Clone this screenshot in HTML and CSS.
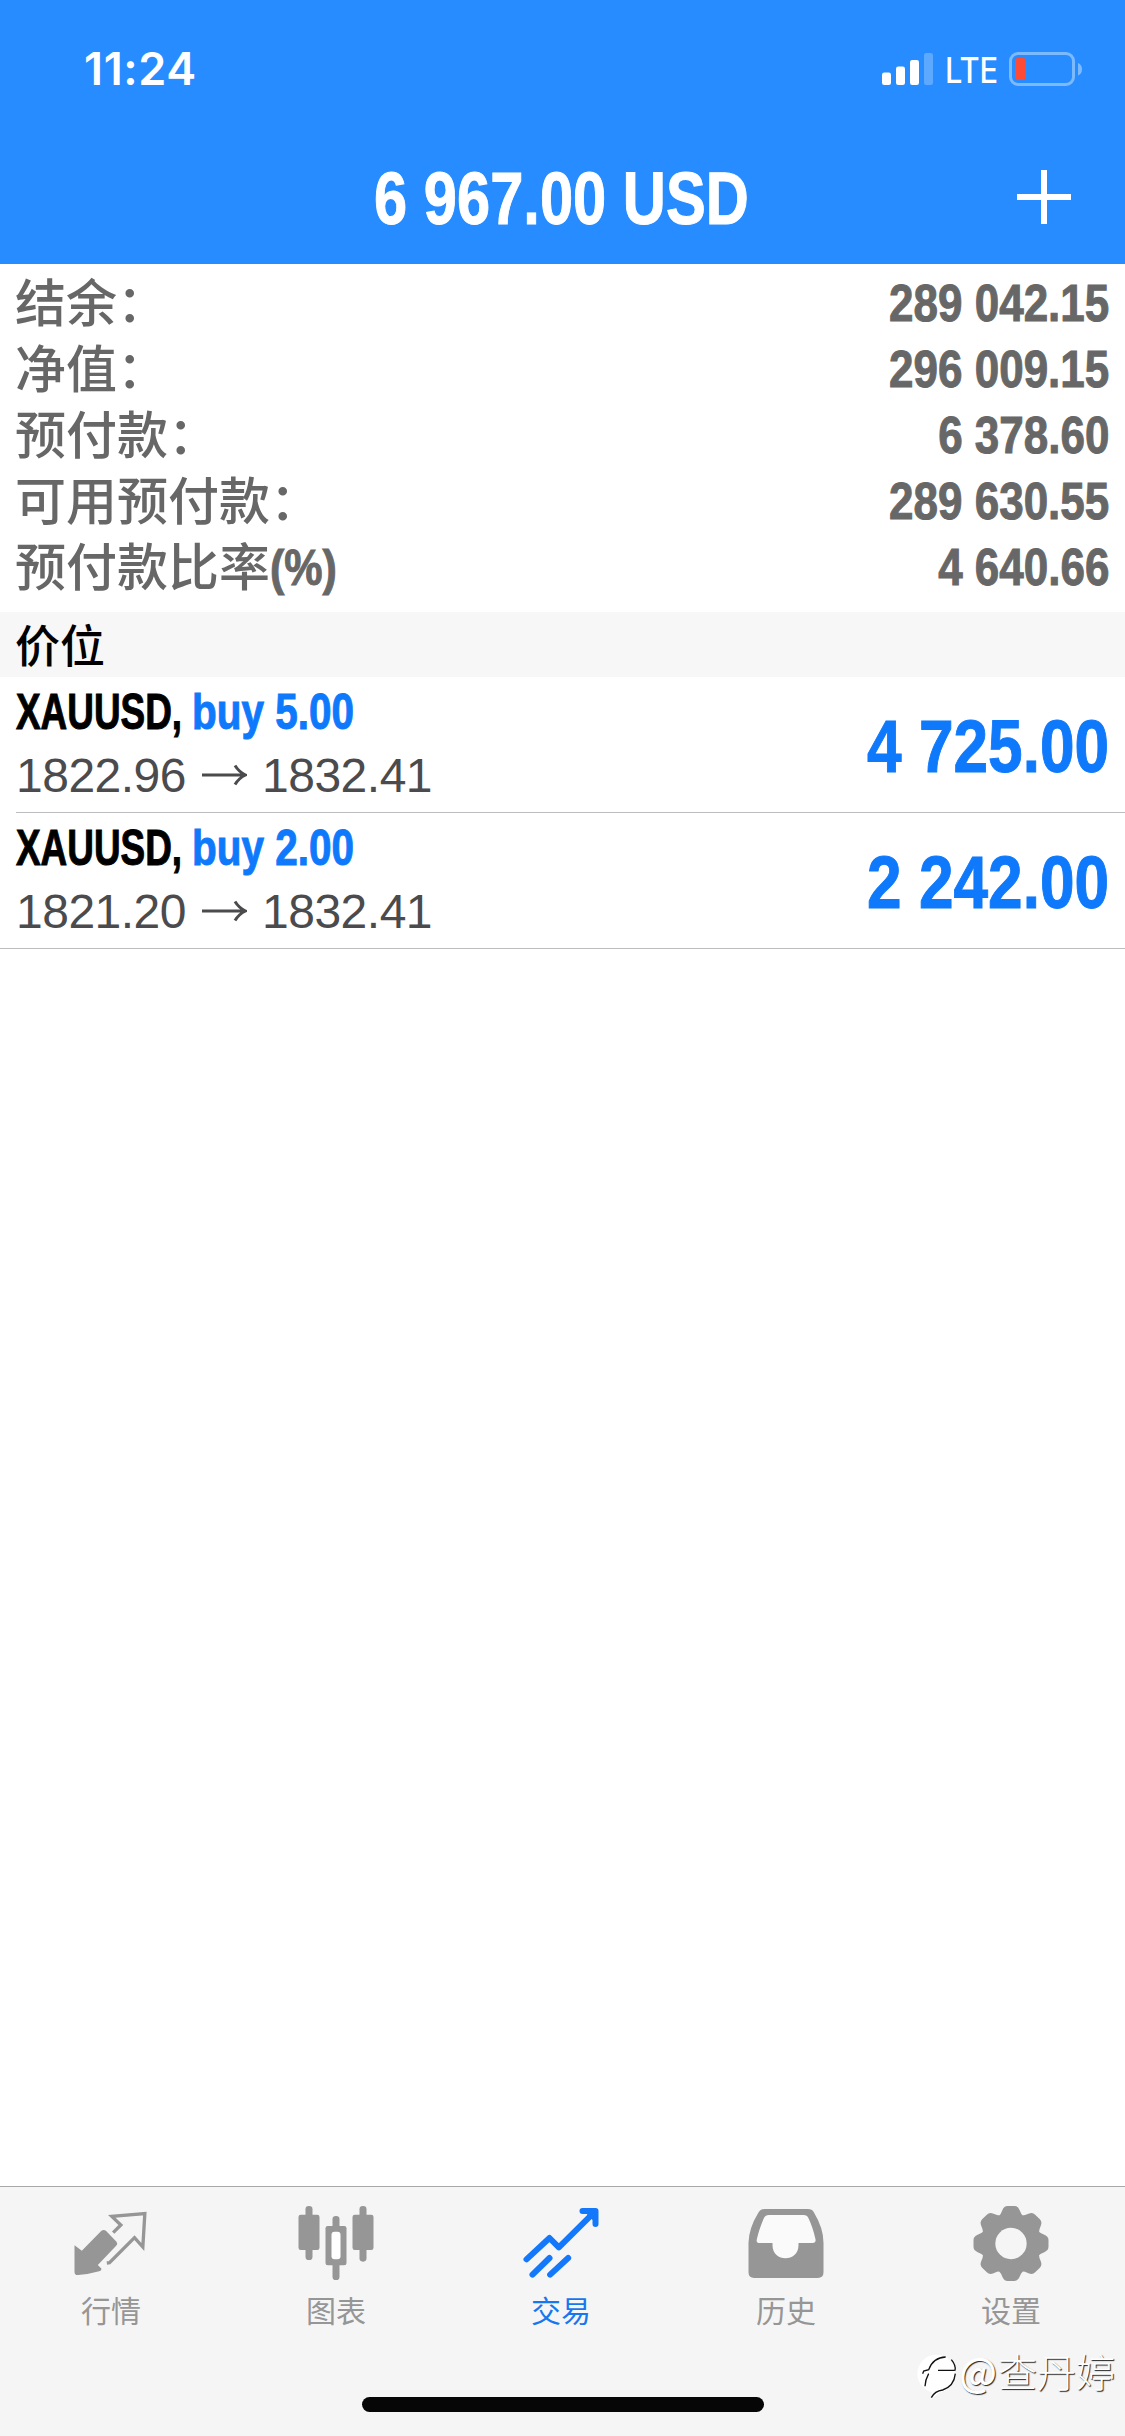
FILE: index.html
```html
<!DOCTYPE html>
<html lang="zh-CN">
<head>
<meta charset="utf-8">
<title>交易</title>
<link rel="stylesheet" href="styles.css">
</head>
<body>
<div class="screen">
  <header class="header">
    <div class="status">
      <span class="time">11:24</span>
      <div class="status-right">
        <svg class="signal" width="51" height="34" viewBox="0 0 51 34" fill="#fff">
          <rect x="0" y="20.5" width="9" height="12.5" rx="2.2"/>
          <rect x="14" y="14.5" width="9" height="18.5" rx="2.2"/>
          <rect x="28" y="8" width="9" height="25" rx="2.2"/>
          <rect x="42" y="1" width="9" height="32" rx="2.2" opacity=".25"/>
        </svg>
        <span class="network">LTE</span>
        <svg class="battery" width="74" height="34" viewBox="0 0 74 34">
          <rect x="1.5" y="1.5" width="63" height="31" rx="7.5" fill="none" stroke="#7cbaff" stroke-width="3"/>
          <path d="M69 11c5.400 1.500 5.400 11 0 12.500z" fill="#7cbaff"/>
          <rect x="6" y="6" width="11" height="22" rx="3" fill="#ff4a36"/>
        </svg>
      </div>
    </div>
    <div class="titlebar">
      <h1 class="title">6 967.00 USD</h1>
      <svg class="add" width="54" height="54" viewBox="0 0 54 54"><path d="M0 27H54M27 0V54" stroke="#fff" stroke-width="6"/></svg>
    </div>
  </header>

  <section class="summary">
    <div class="line"><span>结余：</span><b>289 042.15</b></div>
    <div class="line"><span>净值：</span><b>296 009.15</b></div>
    <div class="line"><span>预付款：</span><b>6 378.60</b></div>
    <div class="line"><span>可用预付款：</span><b>289 630.55</b></div>
    <div class="line"><span>预付款比率<i class="pct">(%)</i></span><b>4 640.66</b></div>
  </section>

  <h2 class="section-head">价位</h2>

  <section class="positions">
    <article class="position">
      <div class="info">
        <div class="name"><span class="symbol">XAUUSD,</span><span class="side">buy 5.00</span></div>
        <div class="prices"><span>1822.96</span><svg width="45" height="24" viewBox="0 0 45 24"><path d="M0 12H43M33 2.500Q37 9 43.500 12Q37 15 33 21.500" fill="none" stroke="#4b4b4d" stroke-width="3"/></svg><span>1832.41</span></div>
      </div>
      <div class="profit">4 725.00</div>
    </article>
    <article class="position">
      <div class="info">
        <div class="name"><span class="symbol">XAUUSD,</span><span class="side">buy 2.00</span></div>
        <div class="prices"><span>1821.20</span><svg width="45" height="24" viewBox="0 0 45 24"><path d="M0 12H43M33 2.500Q37 9 43.500 12Q37 15 33 21.500" fill="none" stroke="#4b4b4d" stroke-width="3"/></svg><span>1832.41</span></div>
      </div>
      <div class="profit">2 242.00</div>
    </article>
  </section>

  <div class="blank"></div>

  <nav class="tabs">
    <div class="tab">
      <svg viewBox="217.5 96 234 246">
        <path d="M225 226L247 242L305 183Q313 177 320 183L351 215Q356 221 350 227L295 285L306 296Q306 302 299 304Q268 313 236 315Q225 316 225 305Z" fill="#969696"/>
        <path d="M341 188L364 165L337 139L436 131L430 231L405 203L330 278L322 279" fill="none" stroke="#969696" stroke-width="10"/>
      </svg>
      <span>行情</span>
    </div>
    <div class="tab">
      <svg viewBox="892.5 96 234 246" fill="#969696">
        <rect x="918" y="108" width="21" height="162" rx="10"/><rect x="897" y="134" width="63" height="106" rx="7"/>
        <rect x="1080" y="108" width="21" height="167" rx="10"/><rect x="1059" y="134" width="63" height="106" rx="7"/>
        <rect x="999" y="138" width="21" height="192" rx="10"/><rect x="978" y="168" width="63" height="118" rx="7"/>
        <rect x="996" y="185" width="27" height="83" rx="9" fill="#fff"/>
      </svg>
      <span>图表</span>
    </div>
    <div class="tab active">
      <svg viewBox="367.5 96 234 246" fill="none" stroke="#1478fa" stroke-width="18" stroke-linecap="round" stroke-linejoin="round">
        <path d="M381 268L450 204L478 232L586 125"/>
        <path d="M549 123H588V162"/>
        <path d="M399 314L450 264M452 314L506 264"/>
        <path d="M570 128L584 142"/>
      </svg>
      <span>交易</span>
    </div>
    <div class="tab">
      <svg viewBox="142.500 96 234 246">
        <path d="M195 117H325Q338 117 343 127Q372 175 372 218V307Q372 324 355 324H164Q147 324 147 307V218Q148 175 176 129Q183 117 195 117Z" fill="#969696"/>
        <path d="M208 135H312Q323 135 327 145Q340 172 348 208Q350 219 339 219H297V226C297 278 219 278 219 226V219H181Q169 219 172 208Q178 180 193 145Q198 135 208 135Z" fill="#fafafa"/>
      </svg>
      <span>历史</span>
    </div>
    <div class="tab">
      <svg viewBox="817.5 96 234 246">
        <g transform="translate(934.5 220.500)" fill="#969696">
          <circle r="87"/>
          <g>
            <path id="tooth" d="M-38 -80Q-29 -90 -26 -100Q-21 -112.500 -10 -112.500H10Q21 -112.500 26 -100Q29 -90 38 -80L25 -50H-25Z"/>
            <use href="#tooth" transform="rotate(45)"/><use href="#tooth" transform="rotate(90)"/><use href="#tooth" transform="rotate(135)"/>
            <use href="#tooth" transform="rotate(180)"/><use href="#tooth" transform="rotate(225)"/><use href="#tooth" transform="rotate(270)"/><use href="#tooth" transform="rotate(315)"/>
          </g>
          <circle r="47" fill="#f5f5f5"/>
        </g>
      </svg>
      <span>设置</span>
    </div>
  </nav>

  <div class="home-bar"></div>

  <div class="watermark">
    <svg width="42" height="48" viewBox="648 550 126 144">
      <circle cx="709" cy="612" r="57" fill="#fff"/>
      <path d="M766 611Q766 652 718 670L692 690L697 660Z" fill="#fff"/>
      <path d="M668 612L671 604L686 600Q700 563 737 562M754 570Q769 588 765 603M714 602H764M686 612Q676 630 675 650M766 612Q762 650 728 661Q704 664 694 684" fill="none" stroke="#111" stroke-width="4"/>
    </svg>
    <span class="at">@</span><span>查丹婷</span>
  </div>
</div>
</body>
</html>
```
FILE: styles.css
```css
* { box-sizing: border-box; margin: 0; padding: 0; }

body {
  width: 1125px;
  height: 2436px;
  background: #fff;
  font-family: "Liberation Sans", "Noto Sans CJK SC", sans-serif;
}

.screen {
  position: relative;
  display: flex;
  flex-direction: column;
  width: 1125px;
  height: 2436px;
  overflow: hidden;
}

.header {
  height: 264px;
  background: #268cff;
  color: #fff;
}

.status {
  display: flex;
  justify-content: space-between;
  height: 134px;
  padding: 42px 42px 0 84px;
}

.time {
  font: 600 45px/54px Inter, sans-serif;
  letter-spacing: 0.6px;
}

.status-right {
  display: flex;
  gap: 12px;
  padding-top: 10px;
  height: 44px;
}

.network {
  width: 53px;
  margin-right: -1px;
  white-space: nowrap;
  font: 500 35px/36px Inter, sans-serif;
  transform: scaleX(0.88);
  transform-origin: left;
}

/* Condensed bold figures */
.title,
.line b,
.pct,
.symbol,
.side,
.profit {
  display: inline-block;
  white-space: nowrap;
  font-family: "Liberation Sans", sans-serif;
  font-style: normal;
  font-weight: bold;
  -webkit-text-stroke: 1px currentColor;
}

.titlebar {
  display: grid;
  grid-template-columns: 1fr auto 1fr;
  align-items: center;
  height: 126px;
  padding-right: 54px;
  padding-left: 51px;
}

.title {
  grid-column: 2;
  font-size: 74px;
  line-height: 86px;
  padding-top: 3px;
  transform: scaleX(0.806);
}

.add { justify-self: end; }

.summary {
  height: 348px;
  padding: 8px 16px 0 15px;
  color: #676767;
}

.line {
  display: flex;
  justify-content: space-between;
  height: 66px;
  line-height: 66px;
  font-size: 51px;
  font-weight: 500;
}

.line b {
  height: 66px;
  margin-top: -2px;
  font-size: 52px;
  transform: scaleX(0.846);
  transform-origin: right;
}

.pct {
  font-size: 50px;
  line-height: 50px;
  transform: scaleX(0.86) translateY(-1px);
  transform-origin: left;
}

.section-head {
  height: 65px;
  padding-left: 15px;
  background: #f7f7f7;
  font: 500 45px/64px "Noto Sans CJK SC", sans-serif;
}

.position {
  display: flex;
  justify-content: space-between;
  height: 136px;
  margin-left: 16px;
  padding-right: 16px;
  border-bottom: 1px solid #bcbcc0;
}

.position:last-child {
  margin-left: 0;
  padding-left: 16px;
}

.info { padding-top: 5px; }

.name {
  display: flex;
  height: 60px;
  font-size: 50px;
  line-height: 60px;
}

.symbol {
  width: 176px;
  transform: scaleX(0.738);
  transform-origin: left;
}

.side {
  transform: scaleX(0.81);
  transform-origin: left;
}

.side,
.profit { color: #0f79fb; }

.prices {
  display: flex;
  align-items: center;
  gap: 15.5px;
  height: 66px;
  font-size: 48px;
  letter-spacing: -0.5px;
  color: #4b4b4d;
}

.profit {
  padding-top: 2px;
  font-size: 74px;
  line-height: 136px;
  transform: scaleX(0.84);
  transform-origin: right;
}

.blank { flex: 1; }

.tabs {
  display: grid;
  grid-template-columns: repeat(5, 225px);
  height: 250px;
  padding-top: 15px;
  border-top: 1px solid #a8a8a8;
  background: #f5f5f5;
}

.tab {
  display: flex;
  flex-direction: column;
  align-items: center;
  margin-left: -3px;
  color: #969696;
  font: 400 30px/44px "Noto Sans CJK SC", sans-serif;
}

.tab.active { color: #1777ef; }

.tab svg {
  width: 78px;
  height: 82px;
  margin-bottom: 3px;
}

.home-bar {
  position: absolute;
  left: 362px;
  top: 2397px;
  width: 402px;
  height: 15px;
  border-radius: 8px;
  background: #060606;
}

.watermark {
  position: absolute;
  left: 916px;
  top: 2353px;
  display: flex;
  color: #fff;
  font: 300 39px/34px "Noto Sans CJK SC", sans-serif;
  text-shadow: 1px 1px 1px #222;
}

.at {
  width: 40px;
  font-weight: 500;
  text-align: center;
}
```
